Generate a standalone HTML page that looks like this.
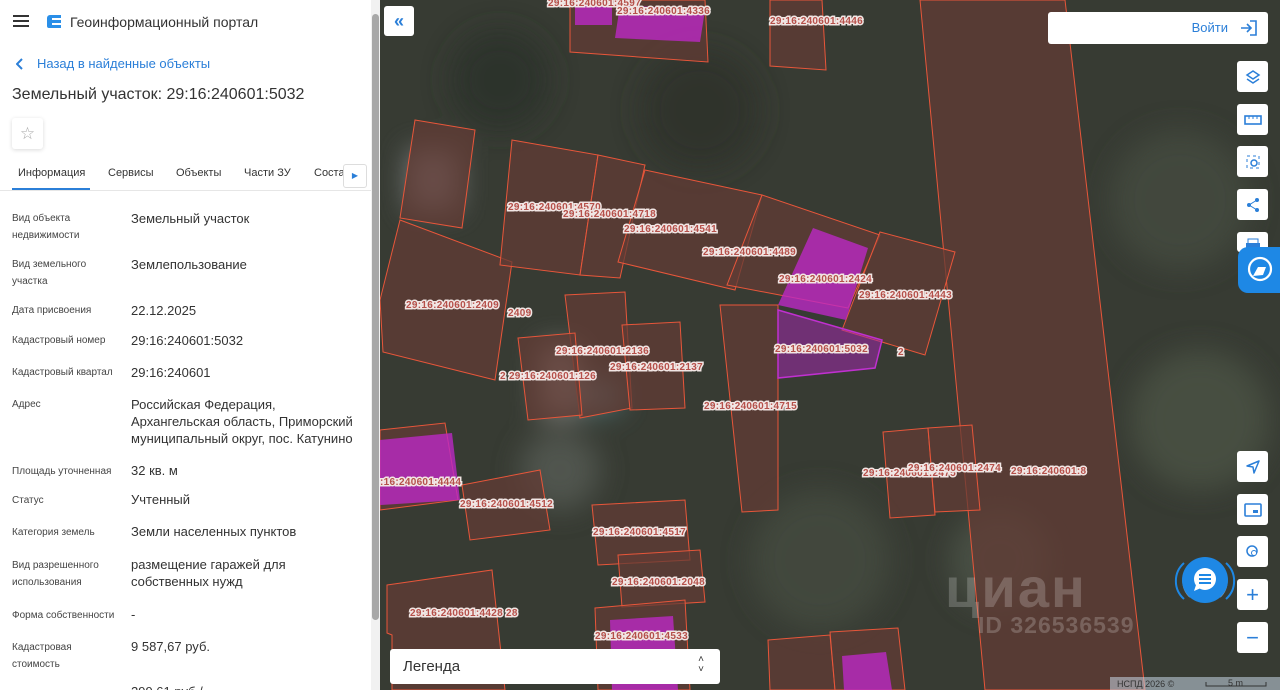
<!DOCTYPE html>
<html><head><meta charset="utf-8"><style>
*{box-sizing:border-box;margin:0;padding:0}
body{width:1280px;height:690px;overflow:hidden;font-family:"Liberation Sans",sans-serif;position:relative;background:#373b33}
#panel{position:absolute;left:0;top:0;width:380px;height:690px;background:#fff;overflow:hidden}
.sb{position:absolute;left:371px;top:0;width:9px;height:690px;background:#f1f1f1}
.sb div{position:absolute;left:1px;top:14px;width:7px;height:606px;background:#a8a8a8;border-radius:4px}
.t{position:absolute;white-space:nowrap}
.lb{position:absolute;left:12px;font-size:10px;color:#444;line-height:17px}
.vl{position:absolute;left:131px;font-size:13px;color:#333;line-height:17px}
#map{position:absolute;left:380px;top:0;width:900px;height:690px;overflow:hidden}
.btn{position:absolute;background:#fff;border-radius:3px;width:31px;height:31px;display:flex;align-items:center;justify-content:center}
.lab{font:bold 10px "Liberation Sans",sans-serif;fill:#b5504a;paint-order:stroke;stroke:#f1e6e4;stroke-width:3px;letter-spacing:.3px}
</style></head><body>
<div id="panel">
 <svg class="t" style="left:13px;top:14px" width="16" height="14"><rect y="1" width="16" height="2" fill="#333"/><rect y="6" width="16" height="2" fill="#333"/><rect y="11" width="16" height="2" fill="#333"/></svg>
 <svg class="t" style="left:46px;top:13px" width="17" height="17" viewBox="0 0 17 17"><path d="M4 2h11v3H6v2h9v3H6v2h9v3H3a2 2 0 0 1-2-2V5a3 3 0 0 1 3-3z" fill="#2a8fe8"/></svg>
 <div class="t" style="left:70px;top:14px;font-size:14px;color:#333">Геоинформационный портал</div>
 <svg class="t" style="left:16px;top:58px" width="8" height="12"><path d="M6 1L1 6l5 5" stroke="#2b7fd8" stroke-width="2" fill="none"/></svg>
 <div class="t" style="left:37px;top:56px;font-size:13px;color:#2b7fd8">Назад в найденные объекты</div>
 <div class="t" style="left:12px;top:86px;font-size:16px;color:#333">Земельный участок: 29:16:240601:5032</div>
 <div class="t" style="left:12px;top:118px;width:31px;height:31px;border-radius:3px;box-shadow:0 1px 4px rgba(0,0,0,.15);display:flex;align-items:center;justify-content:center;font-size:17px;color:#aaa">☆</div>
 <div class="t" style="left:18px;top:167px;font-size:11px;color:#333">Информация</div>
 <div class="t" style="left:108px;top:167px;font-size:11px;color:#333">Сервисы</div>
 <div class="t" style="left:176px;top:167px;font-size:11px;color:#333">Объекты</div>
 <div class="t" style="left:244px;top:167px;font-size:11px;color:#333">Части ЗУ</div>
 <div class="t" style="left:314px;top:167px;font-size:11px;color:#333">Соста</div>
 <div class="t" style="left:12px;top:188px;width:78px;height:2px;background:#2b7fd8"></div>
 <div class="t" style="left:0;top:190px;width:371px;height:1px;background:#e6e6e6"></div>
 <div class="t" style="left:343px;top:164px;width:24px;height:24px;background:#fff;border:1px solid #ddd;border-radius:3px;font-size:8px;color:#2b7fd8;text-align:center;line-height:22px">▶</div>
 <div class="lb" style="top:210px">Вид объекта<br>недвижимости</div><div class="vl" style="top:210px">Земельный участок</div>
 <div class="lb" style="top:256px">Вид земельного<br>участка</div><div class="vl" style="top:256px">Землепользование</div>
 <div class="lb" style="top:302px">Дата присвоения</div><div class="vl" style="top:302px">22.12.2025</div>
 <div class="lb" style="top:332px">Кадастровый номер</div><div class="vl" style="top:332px">29:16:240601:5032</div>
 <div class="lb" style="top:364px">Кадастровый квартал</div><div class="vl" style="top:364px">29:16:240601</div>
 <div class="lb" style="top:396px">Адрес</div><div class="vl" style="top:396px">Российская Федерация,<br>Архангельская область, Приморский<br>муниципальный округ, пос. Катунино</div>
 <div class="lb" style="top:463px">Площадь уточненная</div><div class="vl" style="top:462px">32 кв. м</div>
 <div class="lb" style="top:492px">Статус</div><div class="vl" style="top:491px">Учтенный</div>
 <div class="lb" style="top:524px">Категория земель</div><div class="vl" style="top:523px">Земли населенных пунктов</div>
 <div class="lb" style="top:557px">Вид разрешенного<br>использования</div><div class="vl" style="top:556px">размещение гаражей для<br>собственных нужд</div>
 <div class="lb" style="top:607px">Форма собственности</div><div class="vl" style="top:606px">-</div>
 <div class="lb" style="top:639px">Кадастровая<br>стоимость</div><div class="vl" style="top:638px">9 587,67 руб.</div>
 <div class="vl" style="top:683px">299,61 руб./</div>
 <div class="sb"><div></div></div>
</div>
<div id="map">
<svg width="900" height="690" viewBox="380 0 900 690" style="position:absolute;left:0;top:0">
 <defs><filter id="bl"><feGaussianBlur stdDeviation="14"/></filter></defs>
 <rect x="380" y="0" width="900" height="690" fill="#373b33"/>
 <g filter="url(#bl)" opacity=".8">
  <circle cx="500" cy="80" r="50" fill="#2c312b"/><circle cx="700" cy="110" r="60" fill="#2d322c"/>
  <circle cx="1180" cy="200" r="70" fill="#454b40"/><circle cx="1200" cy="420" r="70" fill="#4b5245"/>
  <circle cx="560" cy="470" r="40" fill="#565c54"/><circle cx="820" cy="560" r="70" fill="#454c40"/>
  <circle cx="1000" cy="560" r="50" fill="#4e544a"/><rect x="408" y="150" width="50" height="60" fill="#8a8c90"/>
  <rect x="540" y="345" width="40" height="70" fill="#9a9592"/><rect x="580" y="380" width="40" height="30" fill="#5a8a90"/>
 </g>
 <g fill="rgba(98,60,52,.74)" stroke="#e8563a" stroke-width="1">
  <polygon points="920,0 1065,0 1145,690 985,690"/>
  <polygon points="570,0 705,0 708,62 570,52"/>
  <polygon points="770,0 822,0 826,70 770,66"/>
  <polygon points="415,120 475,130 462,228 400,218"/>
  <polygon points="400,220 512,262 495,380 383,352 380,300"/>
  <polygon points="512,140 598,155 580,275 500,265"/>
  <polygon points="598,155 645,165 620,278 580,275"/>
  <polygon points="645,170 762,195 735,290 618,262"/>
  <polygon points="762,195 880,235 848,308 727,285"/>
  <polygon points="880,232 955,252 925,355 842,330"/>
  <polygon points="565,295 625,292 632,408 580,418"/>
  <polygon points="622,325 680,322 685,408 630,410"/>
  <polygon points="518,338 575,333 582,415 528,420"/>
  <polygon points="720,305 778,305 778,510 742,512"/>
  <polygon points="380,430 445,423 458,500 380,510"/>
  <polygon points="462,485 540,470 550,530 470,540"/>
  <polygon points="592,505 685,500 690,560 598,565"/>
  <polygon points="618,555 700,550 705,602 622,607"/>
  <polygon points="387,585 492,570 505,690 392,690 392,635 387,633"/>
  <polygon points="595,608 685,600 690,690 598,690"/>
  <polygon points="768,640 830,635 835,690 770,690"/>
  <polygon points="830,632 898,628 905,690 835,690"/>
  <polygon points="883,432 928,428 935,515 890,518"/>
  <polygon points="928,428 972,425 980,510 935,512"/>
 </g>
 <g fill="rgba(190,40,200,.78)">
  <polygon points="813,228 868,248 846,320 778,305"/>
  <polygon points="380,440 452,433 460,500 380,505"/>
  <polygon points="610,620 673,616 678,690 612,690"/>
  <polygon points="842,656 886,652 892,690 844,690"/>
  <polygon points="575,0 612,0 612,25 575,25"/><polygon points="620,5 705,10 700,42 615,38"/>
 </g>
 <polygon points="778,310 882,340 875,368 778,378" fill="rgba(160,40,170,.55)" stroke="#c030d0" stroke-width="1.5"/>
 <g class="lab">
  <text x="548" y="6">29:16:240601:4597</text><text x="617" y="14">29:16:240601:4336</text><text x="770" y="24">29:16:240601:4446</text>
  <text x="508" y="210">29:16:240601:4570</text><text x="563" y="217">29:16:240601:4718</text>
  <text x="624" y="232">29:16:240601:4541</text><text x="703" y="255">29:16:240601:4489</text>
  <text x="779" y="282">29:16:240601:2424</text><text x="859" y="298">29:16:240601:4443</text>
  <text x="406" y="308">29:16:240601:2409</text><text x="508" y="316">2409</text>
  <text x="556" y="354">29:16:240601:2136</text><text x="610" y="370">29:16:240601:2137</text>
  <text x="775" y="352">29:16:240601:5032</text><text x="898" y="355">2</text>
  <text x="500" y="379">2 29:16:240601:126</text><text x="704" y="409">29:16:240601:4715</text>
  <text x="863" y="476">29:16:240601:2475</text><text x="908" y="471">29:16:240601:2474</text><text x="1011" y="474">29:16:240601:8</text>
  <text x="380" y="485">:16:240601:4444</text><text x="460" y="507">29:16:240601:4512</text>
  <text x="593" y="535">29:16:240601:4517</text><text x="612" y="585">29:16:240601:2048</text>
  <text x="410" y="616">29:16:240601:4428 28</text><text x="595" y="639">29:16:240601:4533</text>
 </g>
 <text x="945" y="607" font-family="Liberation Sans" font-weight="bold" font-size="56" letter-spacing="2" fill="rgba(255,255,255,.2)">циан</text>
 <text x="978" y="633" font-family="Liberation Sans" font-weight="bold" font-size="23" letter-spacing="1" fill="rgba(255,255,255,.2)">ID 326536539</text>
 <rect x="1110" y="677" width="170" height="13" fill="rgba(200,215,230,.55)"/>
 <text x="1117" y="687" font-family="Liberation Sans" font-size="9" fill="#333">НСПД 2026 ©</text>
 <path d="M1206 682v4h60v-4" stroke="#333" fill="none"/><text x="1228" y="686" font-family="Liberation Sans" font-size="9" fill="#333">5 m</text>
</svg>
 <div class="btn" style="left:4px;top:6px;width:30px;height:30px;color:#2b7fd8;font-size:18px;font-weight:bold">«</div>
 <div class="t" style="left:668px;top:12px;width:220px;height:32px;background:#fff;border-radius:3px"><span class="t" style="right:40px;top:8px;font-size:13px;color:#2b7fd8">Войти</span>
  <svg class="t" style="right:10px;top:8px" width="18" height="16"><path d="M10 1h6v14h-6M1 8h10M7 4l4 4-4 4" stroke="#2b7fd8" stroke-width="1.6" fill="none"/></svg></div>
 <div class="btn" style="left:857px;top:61px"><svg width="16" height="16"><path d="M8 2l6 4-6 4-6-4z M2 10l6 4 6-4" stroke="#2b7fd8" stroke-width="1.5" fill="none"/></svg></div>
 <div class="btn" style="left:857px;top:104px"><svg width="18" height="10"><rect x="1" y="1" width="16" height="8" stroke="#2b7fd8" stroke-width="1.6" fill="none"/><path d="M5 1v3M9 1v3M13 1v3" stroke="#2b7fd8"/></svg></div>
 <div class="btn" style="left:857px;top:146px"><svg width="16" height="16"><rect x="2" y="2" width="12" height="12" stroke="#2b7fd8" stroke-dasharray="3 3" fill="none"/><circle cx="9" cy="9" r="3" stroke="#2b7fd8" fill="none" stroke-width="1.5"/></svg></div>
 <div class="btn" style="left:857px;top:189px"><svg width="16" height="16"><circle cx="12" cy="3" r="2" fill="#2b7fd8"/><circle cx="4" cy="8" r="2" fill="#2b7fd8"/><circle cx="12" cy="13" r="2" fill="#2b7fd8"/><path d="M12 3L4 8l8 5" stroke="#2b7fd8" fill="none"/></svg></div>
 <div class="btn" style="left:857px;top:232px;height:20px;align-items:flex-start;padding-top:6px"><svg width="16" height="12"><rect x="3" y="1" width="10" height="5" stroke="#2b7fd8" fill="none"/><rect x="1" y="5" width="14" height="6" fill="#2b7fd8"/></svg></div>
 <div class="t" style="left:858px;top:247px;width:42px;height:46px;background:#1e88e5;border-radius:10px 0 0 10px"><svg style="position:absolute;left:8px;top:9px" width="28" height="28"><circle cx="14" cy="13" r="11" stroke="#fff" stroke-width="2.2" fill="none"/><path d="M7 20l5-9h8l-3 8z" fill="#fff"/></svg></div>
 <div class="btn" style="left:857px;top:451px"><svg width="16" height="16"><path d="M14 2L2 7l6 1 1 6z" stroke="#2b7fd8" stroke-width="1.5" fill="none" stroke-linejoin="round"/></svg></div>
 <div class="btn" style="left:857px;top:494px"><svg width="18" height="14"><rect x="1" y="1" width="16" height="12" rx="1" stroke="#2b7fd8" stroke-width="1.6" fill="none"/><rect x="9" y="7" width="5" height="3" fill="#2b7fd8"/></svg></div>
 <div class="btn" style="left:857px;top:536px"><svg width="16" height="16"><circle cx="7" cy="7" r="5" stroke="#2b7fd8" stroke-width="1.5" fill="none"/><circle cx="9" cy="9" r="2.5" stroke="#2b7fd8" fill="#fff"/></svg></div>
 <div class="btn" style="left:857px;top:579px;color:#2b7fd8;font-size:22px">+</div>
 <div class="btn" style="left:857px;top:622px;color:#2b7fd8;font-size:22px">−</div>
 <svg class="t" style="left:790px;top:553px" width="70" height="56"><path d="M14 10a24 24 0 0 0 0 36M56 10a24 24 0 0 1 0 36" stroke="#1e88e5" stroke-width="2" fill="none"/><path d="M20 12a22 22 0 0 0 0 32M50 12a22 22 0 0 1 0 32" stroke="#aaa" stroke-width="1.5" fill="none"/><circle cx="35" cy="27" r="23" fill="#1e88e5"/><circle cx="35" cy="26" r="11" fill="#fff"/><path d="M26 32l-2 6 7-3z" fill="#fff"/><path d="M29 22h12M29 26h12M29 30h12" stroke="#1e88e5" stroke-width="2"/></svg>
 <div class="t" style="left:10px;top:649px;width:330px;height:35px;background:#fff;border-radius:3px"><span class="t" style="left:13px;top:9px;font-size:15px;color:#333">Легенда</span><span class="t" style="right:16px;top:6px;font-size:10px;color:#333;line-height:10px;text-align:center">˄<br>˅</span></div>
</div>
</body></html>
